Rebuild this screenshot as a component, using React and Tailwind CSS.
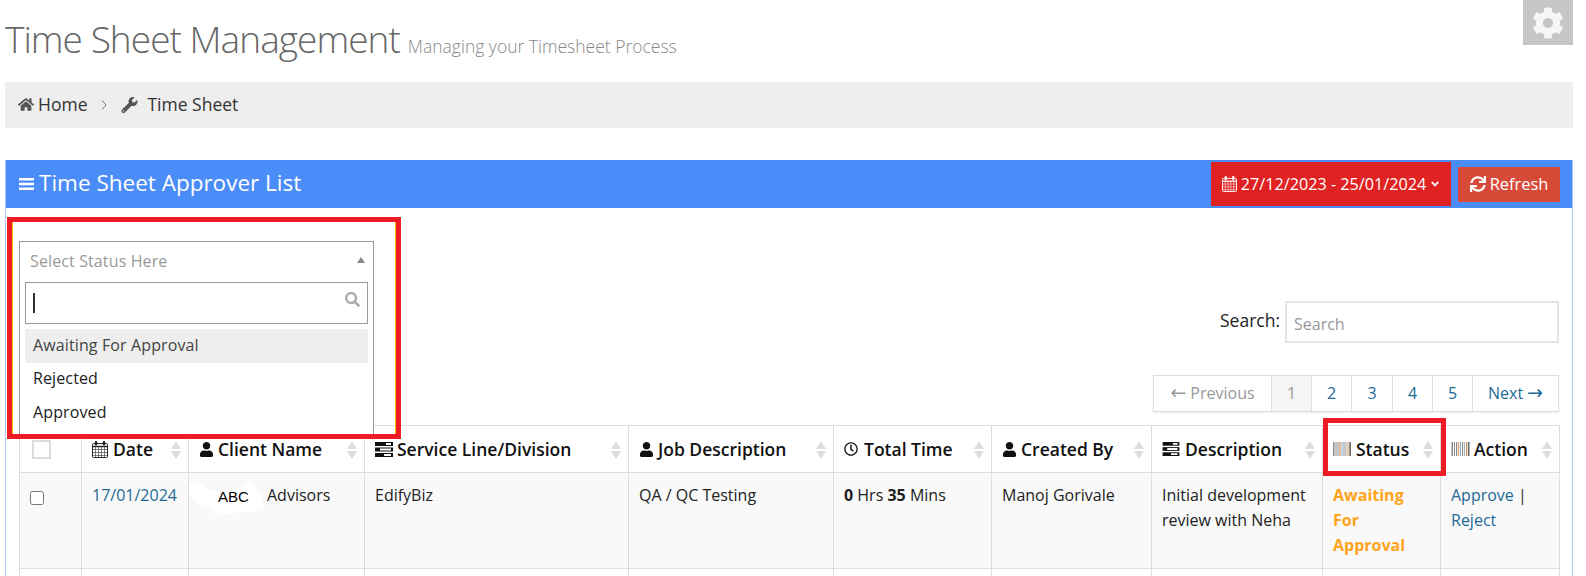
import React from "react";
import { FaHome, FaWrench, FaCog, FaSearch, FaUser, FaRegClock, FaSync, FaAngleDown } from "react-icons/fa";

// FA4-style calendar, the packaged one has no grid
const CalendarIcon = ({ className }) => (
  <svg viewBox="0 0 16 17" className={className} fill="none" stroke="currentColor">
    <rect x="0.5" y="2.5" width="15" height="14" rx="1" />
    <path d="M0 5.5h16" strokeWidth="1.4" />
    <path d="M3.5 6v10M6.5 6v10M9.5 6v10M12.5 6v10M0 8.5h16M0 11.5h16M0 14.5h16" strokeWidth="0.55" />
    <rect x="2.8" y="0" width="2.4" height="4.5" rx="1" fill="currentColor" stroke="none" />
    <rect x="10.8" y="0" width="2.4" height="4.5" rx="1" fill="currentColor" stroke="none" />
  </svg>
);

const TasksIcon = ({ className }) => (
  <svg viewBox="0 0 18 15" className={className} fill="currentColor">
    <path d="M0 0h18v4H0z" />
    <path d="M0 5.5h18v4H0z" />
    <path d="M0 11h18v4H0z" />
    <path d="M11 1h5v2h-5zM5 6.5h11v2H5zM9 12h7v2H9z" fill="#fff" />
  </svg>
);

const BarcodeIcon = ({ className }) => (
  <svg viewBox="0 0 18 14" className={className}>
    <path d="M0 0h1.5v14H0zM2.5 0h1v14h-1zM4.5 0h1v14h-1z" fill="#8a8a8a" />
    <path d="M6.3 0h1.4v14H6.3z" fill="#e0a070" />
    <path d="M8.5 0h1v14h-1z" fill="#7fb0d8" />
    <path d="M10.5 0h1v14h-1z" fill="#909090" />
    <path d="M12.3 0h1.2v14h-1.2z" fill="#b0b0b0" />
    <path d="M14.5 0h1v14h-1z" fill="#d09a60" />
    <path d="M16.3 0h1.7v14h-1.7z" fill="#666" />
  </svg>
);

const SortIcon = () => (
  <svg viewBox="0 0 10 18" className="absolute right-[7px] top-[15px] h-[18px] w-[10px]" fill="#ddd">
    <path d="M5 0l5 8H0z" />
    <path d="M5 18l-5-8h10z" />
  </svg>
);

const columns = [
  { w: "w-[107px]", label: "Date", icon: <CalendarIcon className="h-[17px] w-[16px] text-[#222]" />, gap: "gap-[5px]" },
  { w: "w-[176px]", label: "Client Name", icon: <FaUser className="h-[15px] w-[15px]" />, gap: "gap-[4px]" },
  { w: "w-[264px]", label: "Service Line/Division", icon: <TasksIcon className="h-[15px] w-[18px]" />, gap: "gap-[4px]" },
  { w: "w-[205px]", label: "Job Description", icon: <FaUser className="h-[15px] w-[15px]" />, gap: "gap-[4px]" },
  { w: "w-[158px]", label: "Total Time", icon: <FaRegClock className="h-[14px] w-[14px]" />, gap: "gap-[6px]" },
  { w: "w-[160px]", label: "Created By", icon: <FaUser className="h-[15px] w-[15px]" />, gap: "gap-[4px]" },
  { w: "w-[171px]", label: "Description", icon: <TasksIcon className="h-[14px] w-[18px]" />, gap: "gap-[5px]" },
  { w: "w-[118px]", label: "Status", icon: <BarcodeIcon className="h-[14px] w-[18px]" />, gap: "gap-[5px]" },
  { w: "w-[119px]", label: "Action", icon: <BarcodeIcon className="h-[14px] w-[19px]" />, gap: "gap-[4px]" },
];

const cell = "border border-[#ddd] px-[10px] pt-[10px] pb-[10px] align-top";

function Pagination() {
  const pages = [
    { label: "1", w: "w-[40px]", cls: "bg-[#f5f5f5] text-[#999]" },
    { label: "2", w: "w-[40px]", cls: "text-[#1d6a96]" },
    { label: "3", w: "w-[41px]", cls: "text-[#1d6a96]" },
    { label: "4", w: "w-[40px]", cls: "text-[#1d6a96]" },
    { label: "5", w: "w-[40px]", cls: "text-[#1d6a96]" },
  ];
  return (
    <div className="flex h-[37px] w-[406px] border border-[#ddd] text-[16px] shadow-[0_1px_2px_rgba(0,0,0,0.08)]">
      <div className="flex w-[117px] items-center justify-center pb-[2px] text-[#999]">
        <span className="font-['DejaVu_Sans'] text-[19px] leading-none">←</span>
        <span className="ml-[4px]">Previous</span>
      </div>
      {pages.map((p) => (
        <div key={p.label} className={`flex items-center justify-center border-l border-[#ddd] pb-[2px] ${p.w} ${p.cls}`}>
          {p.label}
        </div>
      ))}
      <div className="flex flex-1 items-center justify-center border-l border-[#ddd] pb-[2px] text-[#1d6a96]">
        <span>Next</span>
        <span className="ml-[4px] font-['DejaVu_Sans'] text-[19px] leading-none">→</span>
      </div>
    </div>
  );
}

function StatusDropdown() {
  return (
    <div className="absolute left-[13px] top-[33px] h-[196px] w-[355px] border border-[#999] bg-white tracking-[0.12px]">
      <div className="flex h-[40px] items-center justify-between pb-[2px] pl-[10px] pr-[8px] text-[16px] text-[#999]">
        <span>Select Status Here</span>
        <span className="mb-[2px] h-0 w-0 border-x-[4px] border-b-[6px] border-x-transparent border-b-[#888]" />
      </div>
      <div className="mx-[5px] flex h-[42px] items-center justify-between border border-[#999] pl-[7px] pr-[7px]">
        <span className="h-[20px] w-[2px] bg-[#333]" />
        <FaSearch className="mb-[7px] h-[15px] w-[15px] text-[#aaa]" />
      </div>
      <div className="mx-[5px] mt-[5px] text-[16px] text-[#222]">
        <div className="h-[34px] bg-[#eee] pl-[8px] leading-[32px] text-[#444]">Awaiting For Approval</div>
        <div className="h-[34px] pl-[8px] leading-[30px]">Rejected</div>
        <div className="h-[34px] pl-[8px] leading-[30px]">Approved</div>
      </div>
    </div>
  );
}

export default function App() {
  return (
    <div
      className="relative h-[576px] w-[1586px] overflow-hidden bg-white pl-[5px] pr-[13px] text-[#222]"
      style={{ fontFamily: '"Open Sans", sans-serif' }}
    >
      {/* page title */}
      <div className="flex h-[82px] items-start justify-between">
        <h1 className="flex items-baseline gap-[8px] pt-[11px] text-[37px] leading-[56px] font-light tracking-[-0.95px] text-[#666]">
          Time Sheet Management
          <small className="text-[17.5px] font-light tracking-normal text-[#888]">Managing your Timesheet Process</small>
        </h1>
        <div className="flex h-[45px] w-[50px] items-center justify-center bg-[#c6c6c6]">
          <FaCog className="h-[32px] w-[32px] text-[#f6f6f6]" />
        </div>
      </div>

      {/* breadcrumb */}
      <div className="flex h-[46px] items-center bg-[#eee] pb-[2px] pl-[13px] text-[17.5px] text-[#333]">
        <FaHome className="h-[15px] w-[16px] text-[#555]" />
        <span className="ml-[4px]">Home</span>
        <svg viewBox="0 0 6 10" className="ml-[14px] mt-[2px] h-[10px] w-[6px]" fill="none" stroke="#777">
          <path d="M1 0.5l4 4.5-4 4.5" />
        </svg>
        <FaWrench className="ml-[14px] mt-[2px] h-[16px] w-[17px] text-[#555]" />
        <span className="ml-[9px]">Time Sheet</span>
      </div>

      {/* portlet */}
      <div className="mt-[32px] border-x border-[#a9c6fb]">
        <div className="flex h-[48px] items-center justify-between bg-[#4b8df8] pl-[13px] pr-[12px] text-white">
          <div className="flex items-center gap-[5px] pb-[3px] text-[22.5px]">
            <svg viewBox="0 0 15 12" className="mt-[3px] h-[12px] w-[15px]" fill="currentColor">
              <path d="M0 0h15v2.4H0zM0 4.8h15v2.4H0zM0 9.6h15V12H0z" />
            </svg>
            <span>Time Sheet Approver List</span>
          </div>
          <div className="flex items-center gap-[7px]">
            <div className="flex h-[44px] w-[240px] items-center justify-center gap-[4px] bg-[#e02222] text-[16.2px]">
              <CalendarIcon className="h-[16px] w-[15px]" />
              <span>27/12/2023 - 25/01/2024</span>
              <FaAngleDown className="h-[12px] w-[10px]" />
            </div>
            <div className="flex h-[35px] w-[102px] items-center justify-center gap-[4px] bg-[#d84a38] text-[16.4px]">
              <FaSync className="h-[16px] w-[16px]" />
              <span>Refresh</span>
            </div>
          </div>
        </div>

        <div className="relative pl-[13px] pr-[12px] pt-[93px]">
          <div className="flex h-[42px] items-center justify-end gap-[5px] pr-[1px] text-[17.5px]">
            <span className="mb-[3px]">Search:</span>
            <div className="flex h-[42px] w-[274px] items-center border-2 border-[#e5e5e5] pl-[7px] pt-[3px] text-[16px] text-[#999]">Search</div>
          </div>
          <div className="mt-[32px] flex justify-end pr-[1px]">
            <Pagination />
          </div>

          <table className="mt-[13px] w-[1541px] table-fixed border-collapse text-[16px] leading-[25px]">
            <thead>
              <tr className="h-[47px]">
                <th className="w-[62px] border border-[#ddd] pl-[12px] pr-0 text-left">
                  <div className="h-[19px] w-[19px] border-2 border-[#ddd]" />
                </th>
                {columns.map((c) => (
                  <th key={c.label} className={`relative border border-[#ddd] pl-[10px] pr-0 text-left ${c.w}`}>
                    <div className={`flex items-center text-[17.5px] font-semibold text-[#111] ${c.gap}`}>
                      {c.icon}
                      <span>{c.label}</span>
                    </div>
                    <SortIcon />
                  </th>
                ))}
              </tr>
            </thead>
            <tbody>
              <tr className="h-[96px] bg-[#f9f9f9]">
                <td className={cell}>
                  <input type="checkbox" className="mt-[8px] block h-[14px] w-[14px]" />
                </td>
                <td className={`${cell} text-[#1d6a96]`}>17/01/2024</td>
                <td className={`${cell} relative`}>
                  {/* white smudge over the redacted client name */}
                  <svg viewBox="0 0 75 36" className="absolute left-0 top-[8px] h-[36px] w-[75px]" fill="#fff">
                    <path d="M0 2L8 1L14 5L22 9L32 11L46 10L55 3L62 1L68 8L72 14L75 24L74 30L52 31L40 33L26 35L25 29L14 26L6 21L0 12z" />
                  </svg>
                  <span className="absolute left-[29px] top-[11px] text-[15px] text-black" style={{ fontFamily: '"Liberation Sans", sans-serif' }}>
                    ABC
                  </span>
                  <span className="absolute left-[78px] top-[10px]">Advisors</span>
                </td>
                <td className={cell}>EdifyBiz</td>
                <td className={cell}>QA / QC Testing</td>
                <td className={cell}>
                  <b>0</b> Hrs <b>35</b> Mins
                </td>
                <td className={cell}>Manoj Gorivale</td>
                <td className={cell}>Initial development review with Neha</td>
                <td className={`${cell} font-bold text-[#ffa31a]`}>Awaiting For Approval</td>
                <td className={`${cell} text-[#1d6a96]`}>
                  Approve <span className="text-[#333]">|</span> Reject
                </td>
              </tr>
              <tr className="h-[60px]">
                <td className={cell} />
                <td className={cell} />
                <td className={cell} />
                <td className={cell} />
                <td className={cell} />
                <td className={cell} />
                <td className={cell} />
                <td className={cell} />
                <td className={cell} />
                <td className={cell} />
              </tr>
            </tbody>
          </table>

          <StatusDropdown />
        </div>
      </div>

      {/* red annotation boxes drawn on the screenshot */}
      <div className="absolute left-[7px] top-[217px] h-[222px] w-[394px] border-[5px] border-[#ed1c24]">
        <div className="h-full w-full border-x border-[#ffc000]" />
      </div>
      <div className="absolute left-[1323px] top-[418px] h-[58px] w-[123px] border-[5px] border-[#ed1c24]" />
    </div>
  );
}
